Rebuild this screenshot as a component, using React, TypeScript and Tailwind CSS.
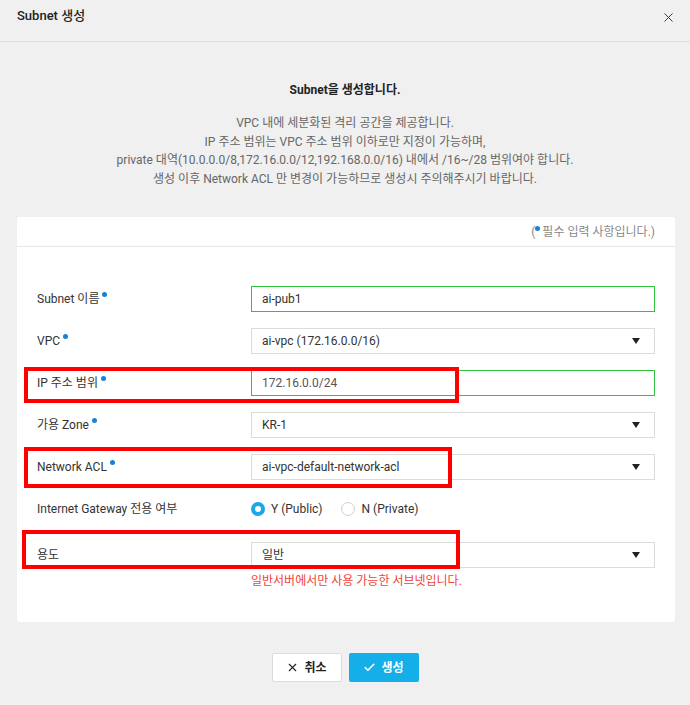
import { X, Check } from 'lucide-react';

const FONT = { fontFamily: 'Roboto, "Noto Sans CJK KR", sans-serif' };

function Dot() {
  return <span className="ml-[3px] inline-block h-[5px] w-[5px] -translate-y-[5px] rounded-full bg-[#1a7fd6]" />;
}

function Caret() {
  return <span className="h-0 w-0 border-x-[4px] border-t-[6px] border-x-transparent border-t-[#222]" />;
}

function Row({ label, required, children, className = '' }: { label: string; required?: boolean; children: React.ReactNode; className?: string }) {
  return (
    <div className={`flex h-[42px] items-center ${className}`}>
      <div className="flex w-[214px] items-center text-[12px] text-[#333]">
        {label}
        {required && <Dot />}
      </div>
      <div className="flex-1">{children}</div>
    </div>
  );
}

function TextBox({ value, muted }: { value: string; muted?: boolean }) {
  return (
    <div className={`flex h-[26px] items-center border border-[#2ec43f] px-[10px] text-[12px] ${muted ? 'text-[#555]' : 'text-[#333]'}`}>
      {value}
    </div>
  );
}

function SelectBox({ value }: { value: string }) {
  return (
    <div className="flex h-[26px] items-center justify-between border border-[#dcdcdc] pl-[10px] pr-[14px] text-[12px] text-[#333]">
      <span>{value}</span>
      <Caret />
    </div>
  );
}

export default function App() {
  return (
    <div className="relative h-[705px] w-[690px] overflow-hidden bg-[#f0f0f0]" style={FONT}>
      <div className="flex h-[42px] items-start justify-between border-b border-[#dedede] pl-[17px] pr-[14px] pt-[6px]">
        <span className="text-[13px] font-medium text-[#222]">Subnet 생성</span>
        <X className="mt-[4px] h-[15px] w-[15px] text-[#333]" strokeWidth={1.5} />
      </div>

      <div className="pt-[39px] text-center text-[12px] font-bold text-[#222]">Subnet을 생성합니다.</div>
      <div className="pt-[15px] text-center text-[12px] leading-[18.5px] text-[#666]">
        <p>VPC 내에 세분화된 격리 공간을 제공합니다.</p>
        <p>IP 주소 범위는 VPC 주소 범위 이하로만 지정이 가능하며,</p>
        <p>private 대역(10.0.0.0/8,172.16.0.0/12,192.168.0.0/16) 내에서 /16~/28 범위여야 합니다.</p>
        <p>생성 이후 Network ACL 만 변경이 가능하므로 생성시 주의해주시기 바랍니다.</p>
      </div>

      <div className="ml-[17px] mt-[29px] h-[405px] w-[658px] rounded-[3px] bg-white">
        <div className="flex h-[30px] items-center justify-end border-b border-[#e6e6e6] pr-[20px] text-[12px] text-[#888]">
          (<span className="mr-[2px] inline-block h-[5px] w-[5px] -translate-y-[3px] rounded-full bg-[#1a7fd6]" />필수 입력 사항입니다.)
        </div>
        <div className="px-[20px] pt-[31px]">
          <Row label="Subnet 이름" required>
            <TextBox value="ai-pub1" />
          </Row>
          <Row label="VPC" required>
            <SelectBox value="ai-vpc (172.16.0.0/16)" />
          </Row>
          <Row label="IP 주소 범위" required>
            <TextBox value="172.16.0.0/24" muted />
          </Row>
          <Row label="가용 Zone" required>
            <SelectBox value="KR-1" />
          </Row>
          <Row label="Network ACL" required>
            <SelectBox value="ai-vpc-default-network-acl" />
          </Row>
          <Row label="Internet Gateway 전용 여부">
            <div className="flex items-center text-[12px] text-[#333]">
              <span className="flex h-[14px] w-[14px] items-center justify-center rounded-full bg-[#1ea7e6]">
                <span className="h-[6px] w-[6px] rounded-full bg-white" />
              </span>
              <span className="ml-[6px]">Y (Public)</span>
              <span className="ml-[18px] h-[14px] w-[14px] rounded-full border border-[#d0d0d0]" />
              <span className="ml-[7px]">N (Private)</span>
            </div>
          </Row>
          <Row label="용도" className="mt-[4px]">
            <SelectBox value="일반" />
          </Row>
          <div className="-mt-[4px] pl-[214px] text-[12px] text-[#f0443a]">일반서버에서만 사용 가능한 서브넷입니다.</div>
        </div>
      </div>

      <div className="mt-[31px] flex justify-center gap-[7px]">
        <button className="flex h-[29px] w-[70px] items-center justify-center gap-[5px] rounded-[2px] border border-[#dcdcdc] bg-white text-[12px] font-bold text-[#222]">
          <X className="h-[13px] w-[13px]" strokeWidth={2} />
          취소
        </button>
        <button className="flex h-[29px] w-[70px] items-center justify-center gap-[5px] rounded-[2px] bg-[#14aee8] text-[12px] font-bold text-white">
          <Check className="h-[13px] w-[13px]" strokeWidth={3} />
          생성
        </button>
      </div>

      <div className="absolute left-[24px] top-[367px] h-[36px] w-[435px] border-[4px] border-[#ff0000]" />
      <div className="absolute left-[24px] top-[447px] h-[41px] w-[428px] border-[4px] border-[#ff0000]" />
      <div className="absolute left-[22px] top-[530px] h-[39px] w-[438px] border-[4px] border-[#ff0000]" />
    </div>
  );
}
